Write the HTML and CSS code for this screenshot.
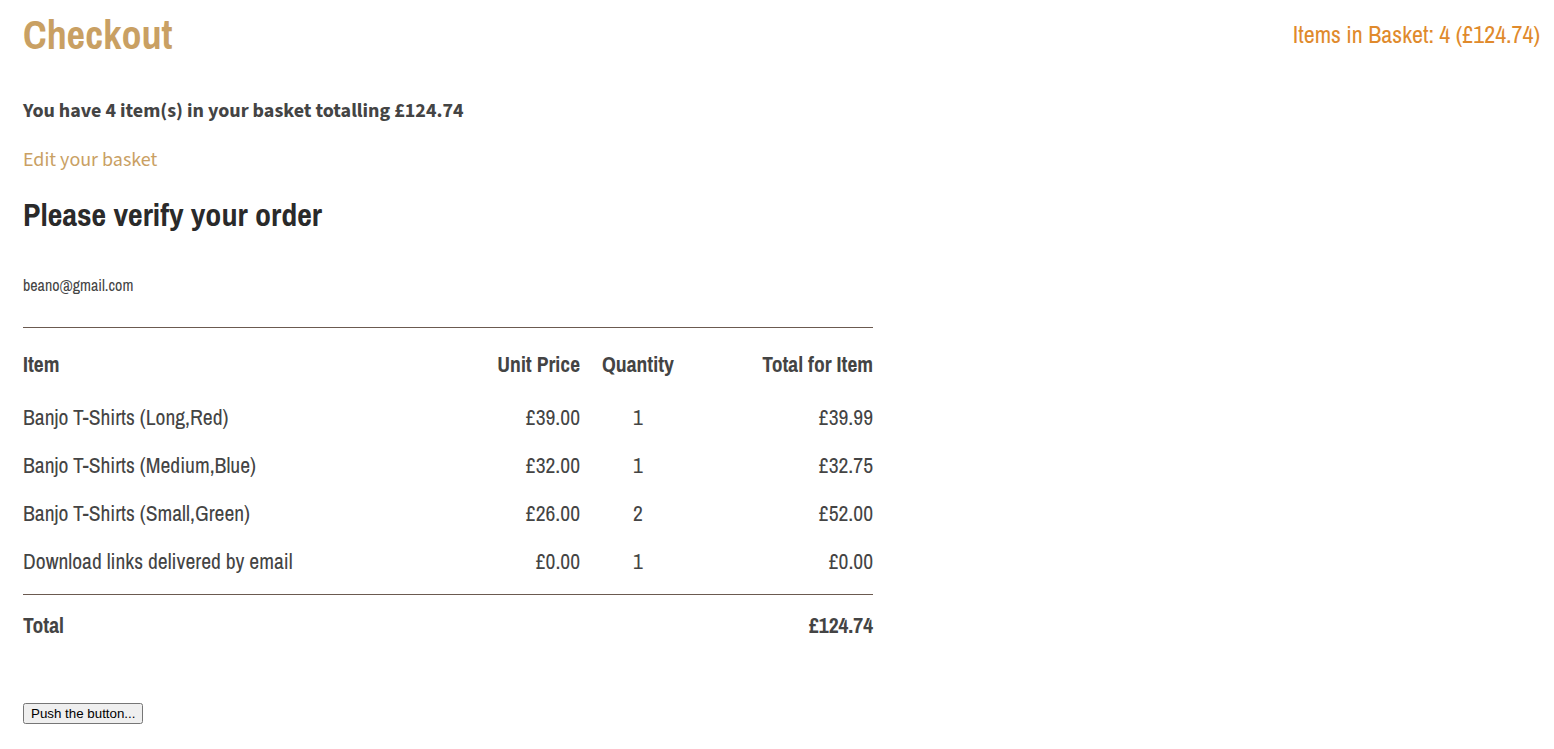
FILE: index.html
```html
<!DOCTYPE html>
<html lang="en">
<head>
    <meta charset="UTF-8">
    <title>Checkout</title>
    <link rel="stylesheet" href="styles.css">
</head>
<body>

    <header class="top">
        <h1>Checkout</h1>
        <div class="basket-status">Items in Basket: 4 (&pound;124.74)</div>
    </header>

    <p class="summary">You have 4 item(s) in your basket totalling &pound;124.74</p>
    <p class="edit"><a href="#">Edit your basket</a></p>

    <h2>Please verify your order</h2>

    <p class="email">beano@gmail.com</p>

    <table class="order">
        <thead>
            <tr>
                <th class="col-item">Item</th>
                <th class="col-price">Unit Price</th>
                <th class="col-qty">Quantity</th>
                <th class="col-total">Total for Item</th>
            </tr>
        </thead>
        <tbody>
            <tr>
                <td class="col-item">Banjo T-Shirts (Long,Red)</td>
                <td class="col-price">&pound;39.00</td>
                <td class="col-qty">1</td>
                <td class="col-total">&pound;39.99</td>
            </tr>
            <tr>
                <td class="col-item">Banjo T-Shirts (Medium,Blue)</td>
                <td class="col-price">&pound;32.00</td>
                <td class="col-qty">1</td>
                <td class="col-total">&pound;32.75</td>
            </tr>
            <tr>
                <td class="col-item">Banjo T-Shirts (Small,Green)</td>
                <td class="col-price">&pound;26.00</td>
                <td class="col-qty">2</td>
                <td class="col-total">&pound;52.00</td>
            </tr>
            <tr>
                <td class="col-item">Download links delivered by email</td>
                <td class="col-price">&pound;0.00</td>
                <td class="col-qty">1</td>
                <td class="col-total">&pound;0.00</td>
            </tr>
        </tbody>
        <tfoot>
            <tr>
                <th class="col-item">Total</th>
                <td></td>
                <td></td>
                <th class="col-total">&pound;124.74</th>
            </tr>
        </tfoot>
    </table>

    <button class="push">Push the button...</button>

</body>
</html>
```

FILE: styles.css
```css
body {
    margin: 0;
    padding: 0 14px 0 23px;
    font-family: "Archivo Narrow", "Roboto Condensed", "Liberation Sans", sans-serif;
    color: #444;
    background: #fff;
}
.top {
    display: flex;
    justify-content: space-between;
    align-items: flex-start;
}
h1 {
    margin: 12px 0 0;
    font-size: 40px;
    line-height: 46px;
    color: #c9a063;
}
.basket-status {
    margin-top: 20px;
    font-size: 24px;
    line-height: 28px;
    color: #e08a2c;
}
.summary,
.edit {
    font-family: "Source Sans 3", "Source Sans Pro", "Open Sans", sans-serif;
    line-height: 26px;
}
.summary {
    margin: 40px 0 0;
    font-weight: bold;
    font-size: 20px;
    color: #444;
}
.edit {
    margin: 23px 0 0;
    font-size: 20px;
}
.edit a {
    color: #c9a063;
    text-decoration: none;
}
h2 {
    margin: 23px 0 0;
    font-size: 32px;
    line-height: 38px;
    color: #2a2a2a;
}
.email {
    margin: 41px 0 0;
    font-size: 16px;
    line-height: 20px;
    color: #444;
}
.order {
    width: 850px;
    margin-top: 32px;
    border-collapse: collapse;
    font-size: 21.6px;
    line-height: 24px;
}
.order thead tr,
.order tfoot tr {
    border-top: 1px solid #6b5a50;
}
.order th,
.order td {
    padding: 12px 0;
    font-weight: normal;
}
.order thead th {
    padding: 25px 0 17px;
    font-weight: bold;
}
.order tbody tr:last-child td {
    padding-bottom: 20px;
}
.order tfoot th {
    padding: 19px 0 20px;
    font-weight: bold;
}
.col-item { text-align: left; }
.col-price { text-align: right; width: 150px; }
.col-qty { text-align: center; width: 116px; }
.col-total { text-align: right; width: 177px; }
.push {
    display: block;
    margin-top: 45px;
    font-family: "Liberation Sans", Arial, sans-serif;
    font-size: 13.33px;
    padding: 1px 6px;
}
```
